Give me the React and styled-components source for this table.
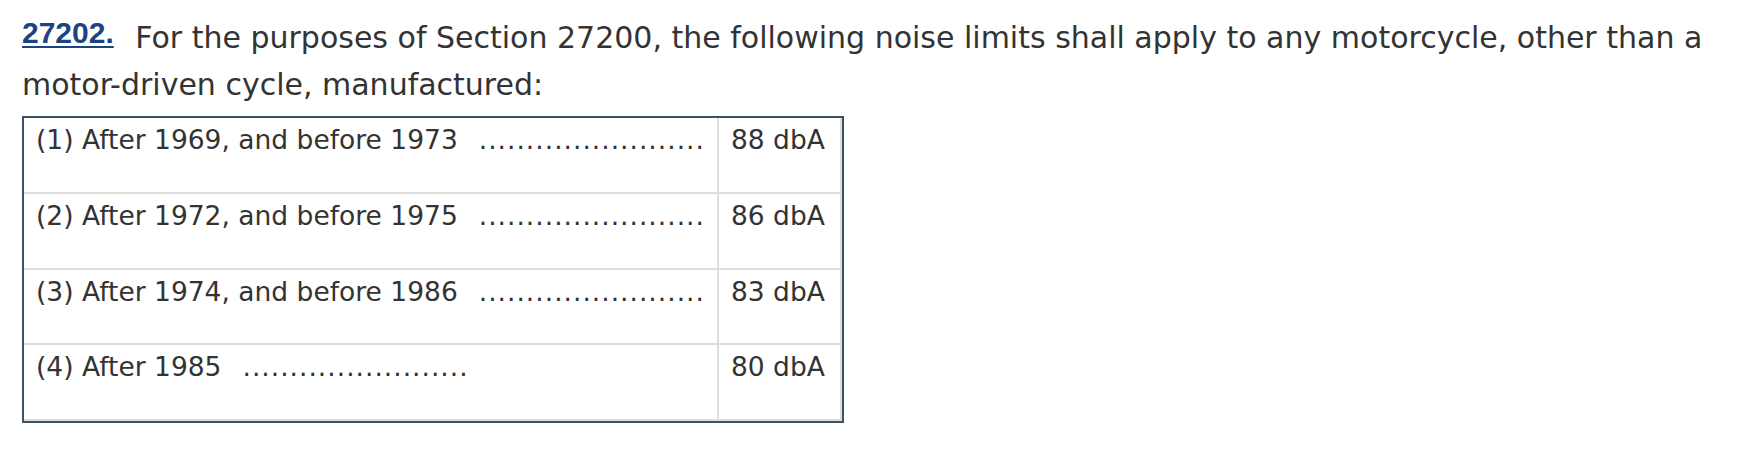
import React from "react";
import styled, { createGlobalStyle } from "styled-components";

const GlobalStyle = createGlobalStyle`
  html, body {
    margin: 0;
    padding: 0;
    background: #ffffff;
  }
  body {
    font-family: "DejaVu Sans", Verdana, sans-serif;
    color: #333333;
  }
`;

const Page = styled.div`
  padding: 14px 20px 0 22px;
`;

const Lead = styled.p`
  margin: 0 0 8px;
  font-size: 30px;
  line-height: 47px;
  color: #333333;
`;

const SectionLink = styled.a`
  font-family: "Liberation Sans", Arial, sans-serif;
  font-weight: bold;
  font-size: 30px;
  line-height: 0;
  color: #1d4482;
  text-decoration: underline;
  text-decoration-thickness: 2px;
  text-underline-offset: 3px;
  vertical-align: 5px;
  margin-right: 12px;
`;

const LimitsTable = styled.table`
  border: 2px solid #3c5267;
  border-collapse: separate;
  border-spacing: 0;
  font-size: 26.5px;
`;

const Cell = styled.td`
  vertical-align: top;
  height: 75.75px;
  box-sizing: border-box;
  padding: 7px 12px 0 12px;
  border-right: 2px solid #dfded9;
  border-bottom: 2px solid #dfded9;
  width: ${(p) => (p.$value ? "123px" : "694px")};
  line-height: 30px;
  white-space: nowrap;
  color: #333333;
`;

const Leader = styled.span`
  margin-left: 21px;
  letter-spacing: 1px;
`;

const rows = [
  { label: "(1) After 1969, and before 1973", value: "88 dbA" },
  { label: "(2) After 1972, and before 1975", value: "86 dbA" },
  { label: "(3) After 1974, and before 1986", value: "83 dbA" },
  { label: "(4) After 1985", value: "80 dbA" }
];

const DOTS = "........................";

export default function App() {
  return (
    <Page>
      <GlobalStyle />
      <Lead>
        <SectionLink href="#27202">27202.</SectionLink> For the purposes of Section 27200, the
        following noise limits shall apply to any motorcycle, other than a motor-driven cycle,
        manufactured:
      </Lead>
      <LimitsTable>
        <tbody>
          {rows.map((r) => (
            <tr key={r.label}>
              <Cell>
                {r.label}
                <Leader>{DOTS}</Leader>
              </Cell>
              <Cell $value>{r.value}</Cell>
            </tr>
          ))}
        </tbody>
      </LimitsTable>
    </Page>
  );
}
